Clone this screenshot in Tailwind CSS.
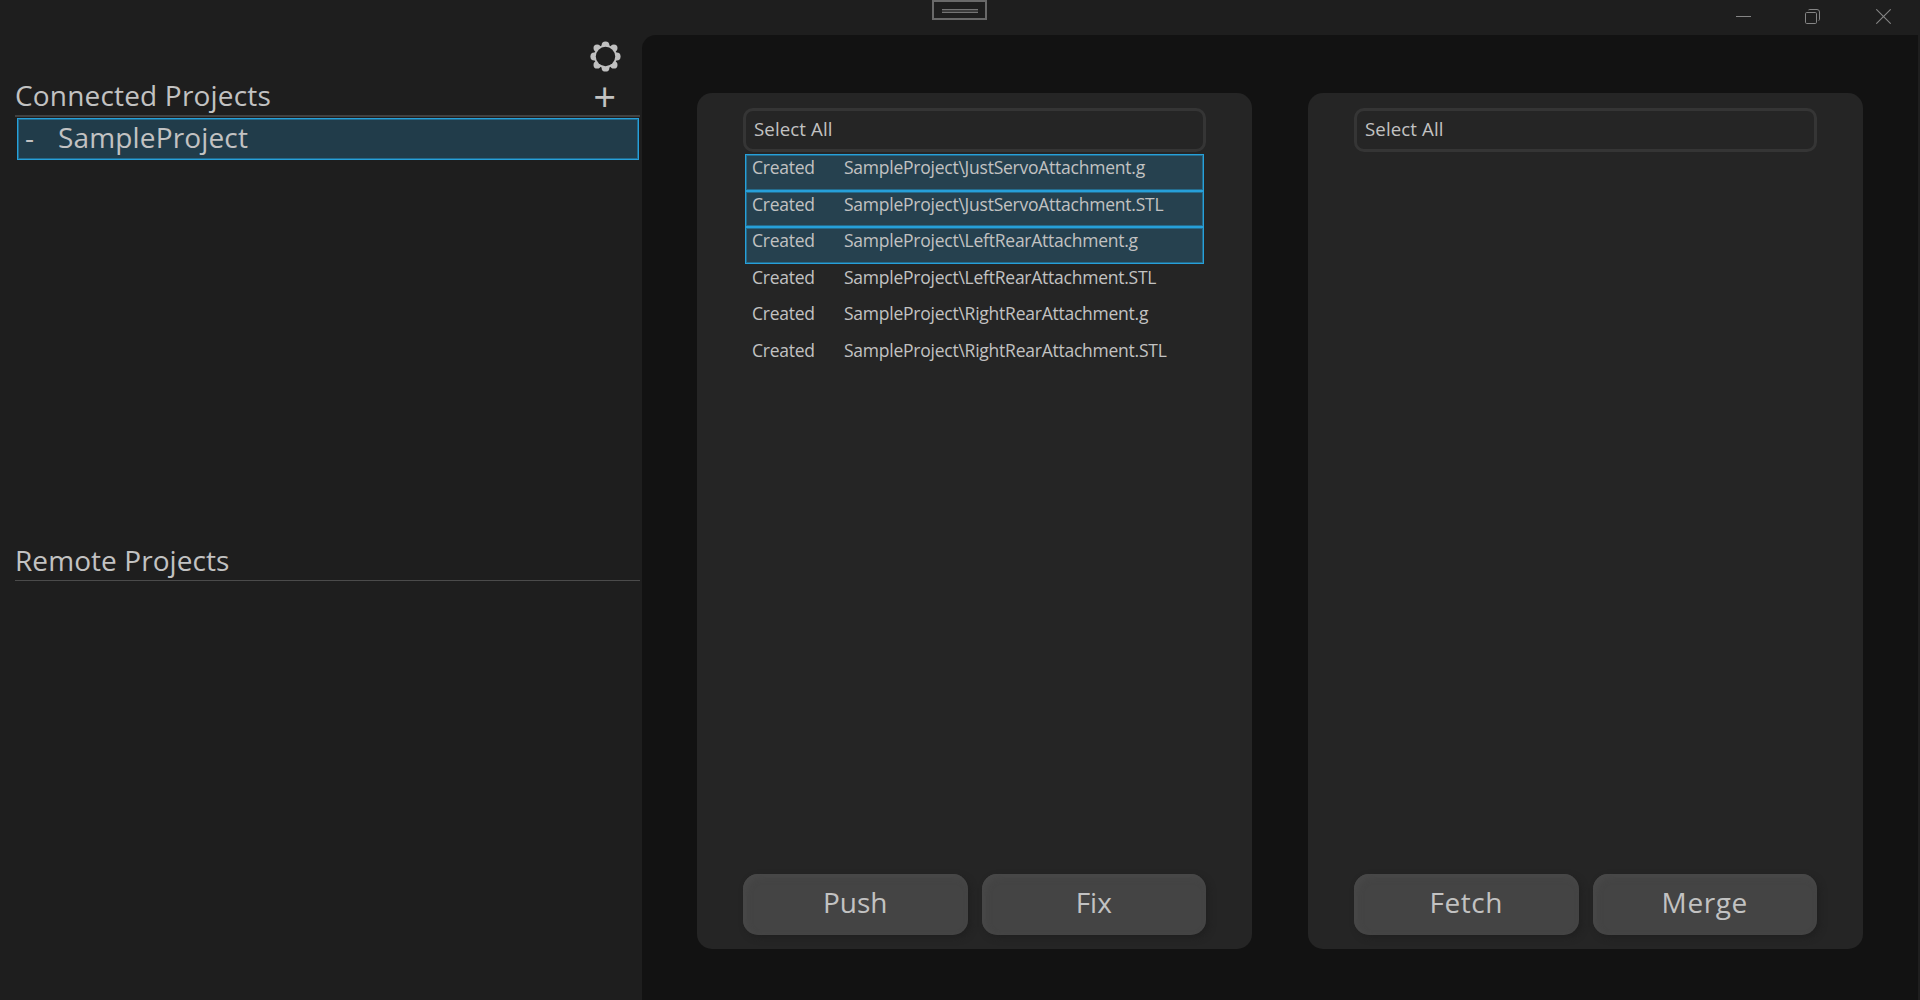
<!DOCTYPE html>
<html lang="en">
<head>
<meta charset="utf-8">
<title>Projects</title>
<script src="https://cdn.jsdelivr.net/npm/@tailwindcss/browser@4"></script>
</head>
<body class="bg-[#1e1e1e] text-[#c2c2c2] font-['Open_Sans',sans-serif] h-[1000px] w-[1920px] overflow-hidden whitespace-nowrap">
<div class="flex flex-col h-full relative">

  <!-- Debug toolbar handle over the title bar -->
  <div class="absolute left-[932px] top-0 w-[55px] h-5 border-2 border-[#696969] flex justify-center pt-[7px]">
    <div class="w-9 h-1 border-y border-[#747474] bg-[#3c3c3c]"></div>
  </div>

  <!-- Title bar -->
  <header class="h-[35px] shrink-0 flex justify-end items-start gap-[54px] pt-[9px] pr-[29px] text-[#858585]">
    <svg class="size-[15px]" viewBox="0 0 15 15" fill="none" stroke="currentColor"><path d="M0 7.5h15"/></svg>
    <svg class="size-[15px]" viewBox="0 0 15 15" fill="none" stroke="currentColor"><rect x=".5" y="3.5" width="11" height="11" rx="1.2"/><path d="M3.5 .9Q4 .5 5 .5h7Q14.5 .5 14.5 3v7.200Q14.500 11 13.700 11.700" /></svg>
    <svg class="size-[15px] ml-[2px]" viewBox="0 0 15 15" fill="none" stroke="currentColor" stroke-width="1.100"><path d="M.3 .3l14.400 14.400M14.700 .3L.3 14.700"/></svg>
  </header>

  <div class="flex flex-1 min-h-0">
    <!-- Sidebar -->
    <aside class="w-[642px] shrink-0 flex flex-col pl-[15px] pr-[2px]">
      <div class="h-10 flex justify-end items-start pt-[6px] pr-[19px]">
        <svg class="size-[31px]" viewBox="-15.5 -15.5 31 31" fill="#c0c0c0">
          <g>
            <circle cx="0" cy="-11.200" r="3.900"/><circle cx="0" cy="11.200" r="3.900"/>
            <circle cx="-11.200" cy="0" r="3.900"/><circle cx="11.200" cy="0" r="3.900"/>
            <circle cx="-8.400" cy="-8.400" r="3.600"/><circle cx="8.400" cy="-8.400" r="3.600"/>
            <circle cx="-8.400" cy="8.400" r="3.600"/><circle cx="8.400" cy="8.400" r="3.600"/>
            <circle r="11.500"/>
          </g>
          <circle r="9.700" fill="#1e1e1e"/>
        </svg>
      </div>
      <div class="h-[42px] border-b-2 border-[#414141] flex justify-between pr-[24px]">
        <h2 class="text-[28px] leading-10 tracking-[0.18px]">Connected Projects</h2>
        <button class="text-[40px] leading-[44px]">+</button>
      </div>
      <div class="mt-px ml-[2px] w-[622px] h-[42px] border border-[#26a0da]">
        <div class="h-full border border-[#236a8c] bg-[#213c4a] flex text-[28px] leading-[34px] tracking-[0.15px]">
          <span class="w-[39px] pl-[6px]">-</span><span>SampleProject</span>
        </div>
      </div>
      <div class="mt-[380px] h-[41px] border-b border-[#4b4b4b]">
        <h2 class="text-[28px] leading-10 tracking-[0.07px]">Remote Projects</h2>
      </div>
    </aside>

    <!-- Content -->
    <main class="w-[1276px] bg-[#121212] rounded-tl-[14px] flex gap-14 pt-[58px] pl-[55px]">
      <section class="w-[555px] h-[856px] rounded-[15px] bg-[#252525] px-[46px] pt-[15px] pb-[14px] flex flex-col">
        <div class="h-11 shrink-0 w-[463px] border-3 border-[#353535] rounded-[10px] pl-[8px] text-[18.67px] leading-9 tracking-[0.1px]">Select All</div>
        <ul id="changes" class="mt-[2px] ml-[2px] w-[459px] text-[17.5px] leading-[22px] tracking-[-0.24px] flex-1"></ul>
        <div class="flex gap-[14px] text-[28px] leading-[56px]">
          <button class="w-[225px] h-[61px] flex justify-center rounded-[15px] bg-[#444444] shadow-[inset_3px_3px_6px_#494949,3px_3px_6px_#202020]">Push</button>
          <button class="w-[225px] h-[61px] flex justify-center rounded-[15px] bg-[#444444] shadow-[inset_3px_3px_6px_#494949,3px_3px_6px_#202020]">Fix</button>
        </div>
      </section>
      <section class="w-[555px] h-[856px] rounded-[15px] bg-[#252525] px-[46px] pt-[15px] pb-[14px] flex flex-col justify-between">
        <div class="h-11 shrink-0 w-[463px] border-3 border-[#353535] rounded-[10px] pl-[8px] text-[18.67px] leading-9 tracking-[0.1px]">Select All</div>
        <div class="flex gap-[14px] text-[28px] leading-[56px] tracking-[0.6px]">
          <button class="w-[225px] h-[61px] flex justify-center rounded-[15px] bg-[#444444] shadow-[inset_3px_3px_6px_#494949,3px_3px_6px_#202020]">Fetch</button>
          <button class="w-[225px] h-[61px] flex justify-center rounded-[15px] bg-[#444444] shadow-[inset_3px_3px_6px_#494949,3px_3px_6px_#202020]">Merge</button>
        </div>
      </section>
    </main>
  </div>
</div>
<script>
const files = [
  ['JustServoAttachment.g', true], ['JustServoAttachment.STL', true], ['LeftRearAttachment.g', true],
  ['LeftRearAttachment.STL', false], ['RightRearAttachment.g', false], ['RightRearAttachment.STL', false],
];
document.getElementById('changes').innerHTML = files.map(([name, selected]) => `
  <li class="h-[36.5px] border ${selected ? 'border-[#26a0da]' : 'border-transparent'}">
    <div class="h-full flex border pl-[5px] ${selected ? 'border-[#256c8d] bg-[#26414f]' : 'border-transparent'}">
      <span class="w-[92px]">Created</span><span>SampleProject\\${name}</span>
    </div>
  </li>`).join('');
</script>
</body>
</html>
